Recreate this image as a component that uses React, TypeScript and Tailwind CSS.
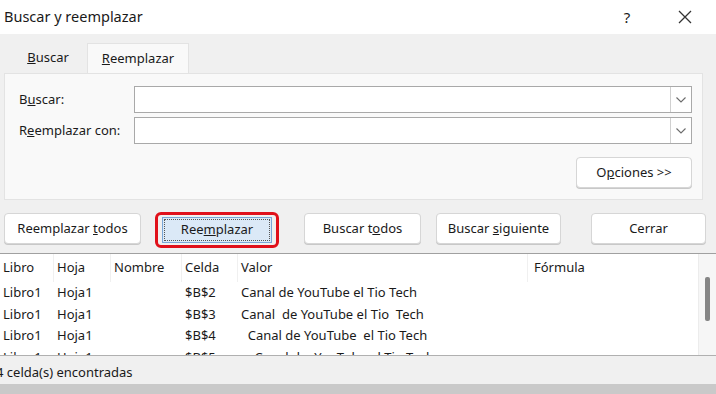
import React from "react";

const font = { fontFamily: '"Noto Sans", "Open Sans", sans-serif' };

const Chevron = () => (
  <svg width="12" height="8" viewBox="0 0 12 8" fill="none">
    <path d="M1.5 1.5 L6 6 L10.5 1.5" stroke="#6b6b6b" strokeWidth="1.1" />
  </svg>
);

const Combo = () => (
  <div className="flex-1 h-[27px] flex bg-white border border-[#a9a9a9]">
    <div className="flex-1" />
    <div className="w-[21px] border-l border-[#d0d0d0] flex items-center justify-center">
      <Chevron />
    </div>
  </div>
);

const Btn = ({
  children,
  className = "",
}: {
  children: React.ReactNode;
  className?: string;
}) => (
  <div
    className={`h-[31px] flex items-center justify-center bg-white border border-[#d6d6d6] rounded-[4px] shadow-[0_1px_0_#c8c8c8] text-[13px] text-[#1a1a1a] ${className}`}
  >
    {children}
  </div>
);

const rows = [
  ["Libro1", "Hoja1", "", "$B$2", "Canal de YouTube el Tio Tech"],
  ["Libro1", "Hoja1", "", "$B$3", "Canal  de YouTube el Tio  Tech"],
  ["Libro1", "Hoja1", "", "$B$4", "  Canal de YouTube  el Tio Tech"],
  ["Libro1", "Hoja1", "", "$B$5", "    Canal de  YouTube el Tio Tech"],
];

const cols = [
  { w: "w-[54px]", label: "Libro" },
  { w: "w-[57px]", label: "Hoja" },
  { w: "w-[71px]", label: "Nombre" },
  { w: "w-[56px]", label: "Celda" },
  { w: "w-[290px]", label: "Valor" },
];

export default function App() {
  return (
    <div
      className="w-[716px] h-[394px] overflow-hidden bg-[#f0f0f0] flex flex-col text-[#1a1a1a]"
      style={font}
    >
      {/* Title bar */}
      <div className="h-[34px] bg-white flex items-center shrink-0">
        <div className="pl-[4px] text-[14.5px] flex-1">Buscar y reemplazar</div>
        <div className="w-[36px] text-center text-[15px] mr-[22px]">?</div>
        <div className="w-[36px] flex items-center justify-center mr-[13px]">
          <svg width="14" height="14" viewBox="0 0 14 14">
            <path d="M1 1 L13 13 M13 1 L1 13" stroke="#333" strokeWidth="1.3" />
          </svg>
        </div>
      </div>

      {/* Tabs */}
      <div className="flex items-end h-[39px] pl-[15px] shrink-0 text-[13px]">
        <div className="w-[66px] h-[28px] flex items-center justify-center mb-[1px]">
          <span>
            <u>B</u>uscar
          </span>
        </div>
        <div className="ml-[6px] w-[102px] h-[30px] bg-[#f9f9f9] border border-b-0 border-[#e3e3e3] flex items-center justify-center">
          <span>
            <u>R</u>eemplazar
          </span>
        </div>
      </div>

      {/* Tab panel */}
      <div className="mx-[4px] mr-[13px] h-[127px] bg-[#f9f9f9] border border-[#e3e3e3] shrink-0 pt-[12px] pl-[14px] pr-[10px] text-[13px]">
        <div className="flex items-center">
          <div className="w-[115px]">
            B<u>u</u>scar:
          </div>
          <Combo />
        </div>
        <div className="flex items-center mt-[4px]">
          <div className="w-[115px]">
            R<u>e</u>emplazar con:
          </div>
          <Combo />
        </div>
        <div className="flex justify-end mt-[13px]">
          <Btn className="w-[116px] h-[30px]">
            <span>
              O<u>p</u>ciones &gt;&gt;
            </span>
          </Btn>
        </div>
      </div>

      {/* Action buttons */}
      <div className="flex items-start h-[53px] shrink-0 pl-[4px] pt-[13px]">
        <Btn className="w-[137px]">
          <span>
            Reemplazar <u>t</u>odos
          </span>
        </Btn>
        <div className="ml-[14px] -mt-[1px] w-[124px] h-[36px] rounded-[6px] border-[3px] border-[#e0101a] flex items-center justify-center">
          <div className="w-[110px] h-[26px] bg-[#dbe9f7] border border-[#7aa6d6] outline-1 outline-dotted outline-[#555] -outline-offset-[3px] flex items-center justify-center text-[13px]">
            <span>
              Ree<u>m</u>plazar
            </span>
          </div>
        </div>
        <Btn className="ml-[25px] w-[117px]">
          <span>
            Buscar t<u>o</u>dos
          </span>
        </Btn>
        <Btn className="ml-[15px] w-[125px]">
          <span>
            Buscar <u>s</u>iguiente
          </span>
        </Btn>
        <Btn className="ml-[30px] w-[115px]">Cerrar</Btn>
      </div>

      {/* Results list */}
      <div className="h-[103px] shrink-0 bg-white border-t border-[#a0a0a0] border-b border-b-[#b0b0b0] flex text-[13px] overflow-hidden">
        <div className="flex-1 flex flex-col">
          <div className="flex h-[28px] shrink-0 items-center">
            {cols.map((c) => (
              <div
                key={c.label}
                className={`${c.w} h-full flex items-center pl-[3px] border-r border-[#f0f0f0]`}
              >
                {c.label}
              </div>
            ))}
            <div className="flex-1 pl-[6px]">Fórmula</div>
          </div>
          {rows.map((r, i) => (
            <div key={i} className="flex h-[21.5px] shrink-0 items-center whitespace-pre">
              <div className="w-[54px] pl-[3px]">{r[0]}</div>
              <div className="w-[57px] pl-[3px]">{r[1]}</div>
              <div className="w-[71px] pl-[3px]">{r[2]}</div>
              <div className="w-[56px] pl-[3px]">{r[3]}</div>
              <div className="w-[290px] pl-[3px]">{r[4]}</div>
            </div>
          ))}
        </div>
        <div className="w-[18px] bg-[#f6f6f6] border-l border-[#ececec] flex justify-center">
          <div className="mt-[23px] w-[5px] h-[44px] bg-[#858585] rounded-[2px]" />
        </div>
      </div>

      {/* Status bar */}
      <div className="h-[28px] shrink-0 bg-[#f0f0f0] flex items-center text-[13px] -ml-[4px] pt-[6px]">
        4 celda(s) encontradas
      </div>
      <div className="flex-1 bg-[#c9c9c9]" />
    </div>
  );
}
